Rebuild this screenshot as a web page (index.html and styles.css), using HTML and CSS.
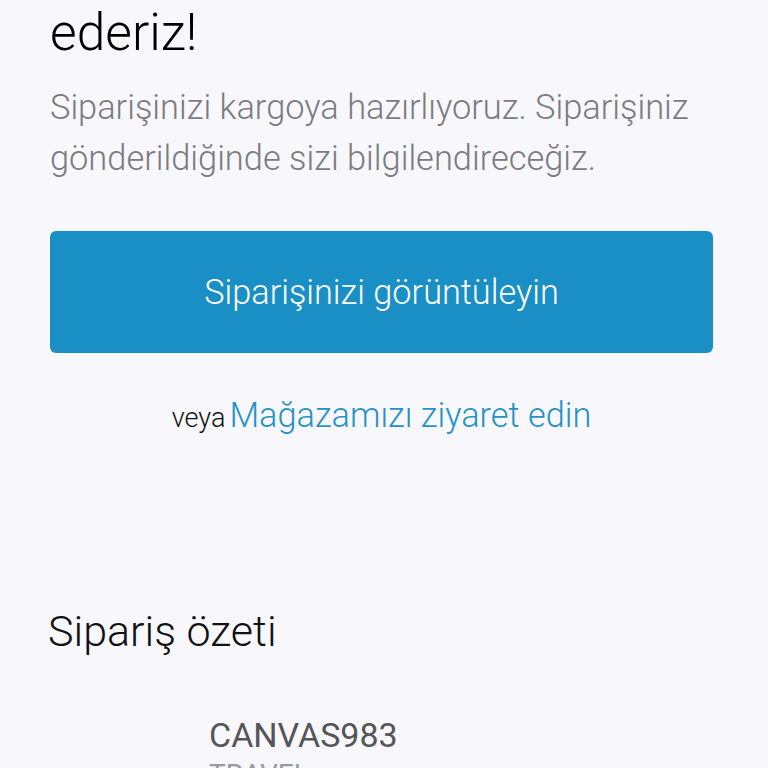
FILE: index.html
```html
<!DOCTYPE html>
<html lang="tr">
<head>
<meta charset="utf-8">
<link rel="stylesheet" href="styles.css">
</head>
<body>
<main class="page">
  <h1 class="title">ederiz!</h1>
  <p class="lead">Siparişinizi kargoya hazırlıyoruz. Siparişiniz gönderildiğinde sizi bilgilendireceğiz.</p>
  <a class="btn" href="#">Siparişinizi görüntüleyin</a>
  <p class="alt"><span class="alt-or">veya</span> <a class="alt-link" href="#">Mağazamızı ziyaret edin</a></p>
  <h2 class="summary-title">Sipariş özeti</h2>
  <div class="item">
    <div class="item-thumb"></div>
    <div class="item-info">
      <div class="item-name">CANVAS983</div>
      <div class="item-variant">TRAVEL</div>
    </div>
  </div>
</main>
</body>
</html>
```
FILE: styles.css
```css
html, body {
  margin: 0;
  padding: 0;
  background: #f8f8fc;
  height: 768px;
  overflow: hidden;
}
body {
  font-family: Roboto, "Noto Sans", sans-serif;
}
.page {
  padding: 5px 55px 0 50px;
  display: flex;
  flex-direction: column;
}
.title {
  margin: 0;
  font-size: 51.5px;
  line-height: 56px;
  font-weight: 300;
  color: #000;
}
.lead {
  margin: 21px 0 0;
  font-size: 34.4px;
  line-height: 51px;
  font-weight: 300;
  color: #7b7b80;
}
.btn {
  margin-top: 47px;
  height: 122px;
  display: flex;
  align-items: center;
  justify-content: center;
  background: #1a8fc6;
  border-radius: 6px;
  color: #fff;
  font-size: 34.3px;
  font-weight: 300;
  text-decoration: none;
}
.alt {
  margin: 42px 0 0;
  text-align: center;
  line-height: 40px;
}
.alt-or {
  font-size: 27px;
  font-weight: 300;
  color: #111;
}
.alt-link {
  font-size: 34.3px;
  font-weight: 300;
  color: #2592c8;
  text-decoration: none;
}
.summary-title {
  margin: 164px 0 0 -2px;
  font-size: 43px;
  line-height: 50px;
  font-weight: 300;
  color: #111;
}
.item {
  margin-top: 59px;
  display: flex;
}
.item-thumb {
  width: 159px;
  flex: none;
}
.item-info {
  display: flex;
  flex-direction: column;
}
.item-name {
  font-size: 34px;
  line-height: 40px;
  color: #555558;
}
.item-variant {
  font-size: 28px;
  line-height: 40px;
  color: #9a9aa0;
}
```
